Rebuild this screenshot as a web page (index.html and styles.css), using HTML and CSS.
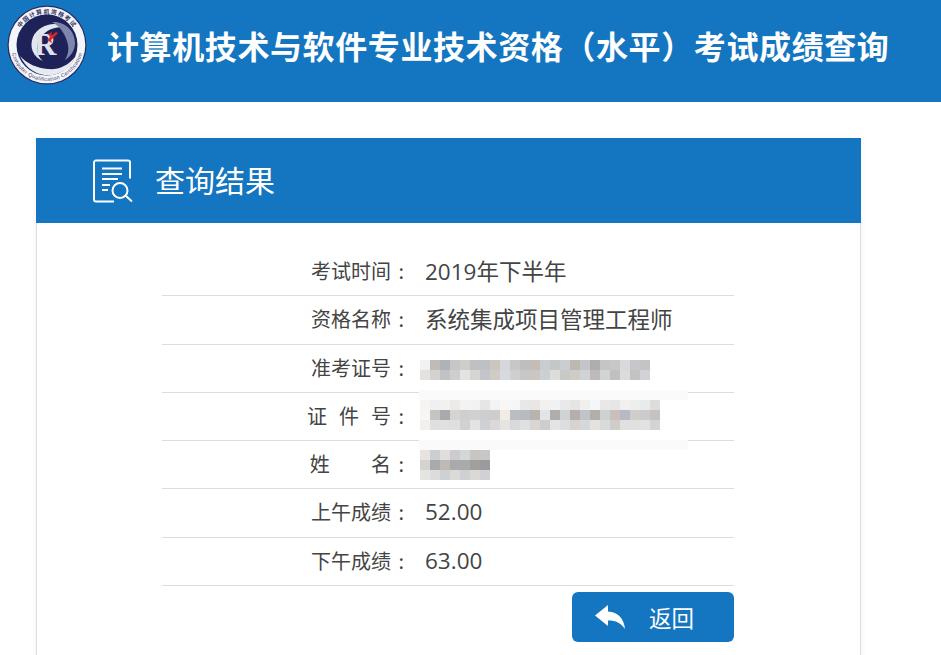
FILE: index.html
```html
<!DOCTYPE html>
<html lang="zh-CN">

<head>
    <meta charset="UTF-8">
    <meta name="viewport" content="width=device-width, initial-scale=1.0">
    <title>成绩查询</title>
    <link rel="stylesheet" href="styles.css">
</head>

<body>
    <div class="top">
        <svg class="logo" viewBox="0 0 80 80">
            <defs>
                <path id="ringTop" d="M8.500 40a31.500 31.500 0 0 1 63 0" />
                <path id="ringBottom" d="M4 40a36 36 0 0 0 72 0" />
            </defs>
            <circle cx="40" cy="40" r="39.5" fill="#2a2a60" />
            <circle cx="40" cy="40" r="38.3" fill="#f4f5f8" />
            <circle cx="40" cy="40" r="30.5" fill="#1f2258" />
            <text class="ring-cn"><textPath href="#ringTop" startOffset="50%" text-anchor="middle">中国计算机资格考试</textPath></text>
            <text class="ring-en"><textPath href="#ringBottom" startOffset="50%" text-anchor="middle">Computer Qualification Certification</textPath></text>
            <path d="M13 51c7 15 21 21 33 19 10-2 19-9 22-18-7 9-17 13-27 12-11-1-21-5-28-13z" fill="#e8eaf2" />
            <path d="M60 23C48 15 32 20 26 32c-4 10 0 20 10 24-6-5-8-13-4-21 5-9 16-15 28-12z" fill="#e4e6ef" />
            <path d="M45 17c13-1 23 9 23 21 0 7-4 13-10 17 3-5 4-10 3-15-2-10-7-18-16-23z" fill="#7f86ad" />
            <text class="logo-r" x="27" y="50">R</text>
            <path d="M41 29l4-2-1 4 5-4 2 1-7 7 1 3-5-3 3-3z" fill="#d9252c" />
        </svg>
        <h1 class="top-title">计算机技术与软件专业技术资格<span class="paren">（</span>水平<span class="paren">）</span>考试成绩查询</h1>
    </div>

    <div class="card">
        <div class="card-head">
            <svg class="doc-icon" viewBox="0 0 40 44" fill="none" stroke="#fff" stroke-width="2">
                <path d="M21 42.500H3a2 2 0 0 1-2-2v-37a2 2 0 0 1 2-2h32a2 2 0 0 1 2 2v16" />
                <path d="M9 9.500h20M9 15h20M9 20h16M9 26h8M9 31h6" />
                <circle cx="27" cy="31.500" r="7.500" />
                <path d="M33 37l6 5.500" />
            </svg>
            <div class="card-title">查询结果</div>
        </div>
        <div class="result">
            <div class="row"><span class="label">考试时间<i class="colon">:</i></span><span class="val">2019年下半年</span></div>
            <div class="row"><span class="label">资格名称<i class="colon">:</i></span><span class="val">系统集成项目管理工程师</span></div>
            <div class="row"><span class="label">准考证号<i class="colon">:</i></span><div class="mosaic mosaic-id" data-k="0"></div></div>
            <div class="row"><span class="label label-wide">证 件 号<i class="colon">:</i></span><div class="mosaic mosaic-band" data-k="1"></div></div>
            <div class="row"><span class="label">姓&emsp;&emsp;&#8202;名<i class="colon">:</i></span><div class="mosaic mosaic-name" data-k="2"></div></div>
            <div class="row"><span class="label">上午成绩<i class="colon">:</i></span><span class="val">52.00</span></div>
            <div class="row"><span class="label">下午成绩<i class="colon">:</i></span><span class="val">63.00</span></div>
            <div class="btn-row">
                <button class="back">
                    <svg class="back-icon" viewBox="0 0 30 24"><path d="M0 10.500L13 0v6.500c10 .5 16 7 17 17.500-4-6-9-8.500-17-8.500V21z" fill="#fff" /></svg>
                    <span>返回</span>
                </button>
            </div>
        </div>
    </div>

    <script>
        // blurred personal fields, one colour per 10px block
        let blocks = [
            ["f2f1f0 bfbbb8 b0b2b9 c6c6c6 cfcdca c0c0c2 bfc0c2 cbc7c0 d4d8dc c6c8c8 bdbdc2 c4bcb6 c9cdd1 c5c6c6 cbced0 bdb8b2 c3c5cb b0adb0 c4c5c7 c9c7c4 d8d9dc c6c7c8 c4c4c7",
             "e4e1de d3d2cf c0c3c6 d0cecc e3e3e2 d6d5d2 c4c5ca cfccc5 d6dade cfcfcf c7c7c9 cbc6c2 ccd0d3 dcdcdb c8cac8 cfcbc5 d1d2d3 bdbabb d2d3d5 c1bfc0 dcdcdb c5c3c1 d2d2d6"],
            ["f5f4f3 eef0f2 f2f1f1 ebeae8 f3f3f2 f1f2f2 e6e6e6 f2f3f3 f8f7f6 f5f6f6 e8e8e8 e8e7e5 f2f1ef f0f1f3 e8e9ea e5e5e5 efefec f5f6f7 e8e8e8 e6e6e6 f2f0ee eeeeec e9eaec dddddd",
             "f7f6f5 c6c4c2 aaa9ae d5d4d3 cfcfcf d1d1d1 cdced1 cecdcc f1ede6 babdc1 b7bbbf b9b3ae e2e5e7 afaeae d0d3d4 b5aeaa c0c3c7 b2afaa ced1d2 c9bfbc b7bac4 d0cdca cbcbcd c5c2bf",
             "f1f0ef dfdfdf e0e0e0 e0dfde d1d1d1 e4e3e1 cfd0d5 dad9d7 e6e4e1 d8d9db dfe0e2 d8d6d3 cecdcd e4e4e4 dcdddf d8d3ce d7d7da e2e2de d9dadb cfcdca e1e0df e0e0df e2e2e2 d4d4d4"],
            ["e6e3e0 ccced0 e0dedd ccccce d3d7d8 c8c5c3 c6c7c9",
             "d6d3ce a8aaac bfb9b3 a8aaac a8aaac a39f9c 9b9b9e",
             "e4e4e2 dcdcdc ced0d3 dcdad6 cfd0d4 d9d9d6 cfd1d4"]
        ]
        document.querySelectorAll(".mosaic").forEach(m => {
            blocks[m.dataset.k].forEach(line => {
                let row = document.createElement("div")
                row.className = "mosaic-line"
                row.innerHTML = line.split(" ").map(c => `<i style="background:#${c}"></i>`).join("")
                m.appendChild(row)
            })
        })
    </script>
</body>

</html>
```

FILE: styles.css
```css
* {
    box-sizing: border-box;
    padding: 0;
    margin: 0;
}

html,
body {
    height: 100%;
    overflow: hidden;
}

body {
    font-family: "Noto Sans CJK SC", "Liberation Sans", sans-serif;
    color: #444;
    background: #fff;
}

.top {
    height: 102px;
    background: #1475c0;
    display: flex;
    align-items: flex-start;
    padding: 5px 0 0 7px;
}

.logo {
    width: 80px;
    height: 80px;
    flex: none;
}

.ring-cn {
    font-size: 6px;
    font-weight: bold;
    fill: #34386a;
    letter-spacing: 1px;
}

.ring-en {
    font-size: 5.200px;
    font-family: "Liberation Sans", sans-serif;
    fill: #34386a;
    letter-spacing: .4px;
}

.logo-r {
    font-family: "Liberation Serif", serif;
    font-size: 31px;
    font-weight: bold;
    fill: #dfe1ea;
}

.top-title {
    font-size: 32px;
    letter-spacing: .6px;
    font-weight: bold;
    color: #fff;
    line-height: 46px;
    margin: 17px 0 0 20px;
    white-space: nowrap;
}

.paren {
    font-family: "Noto Sans CJK TC", "Noto Sans CJK SC", sans-serif;
}

.card {
    width: 825px;
    height: 600px;
    margin: 36px 0 0 36px;
    border: solid 1px #ddd;
    border-top: 0;
    box-shadow: 0 0 8px rgba(0, 0, 0, .05);
}

.card-head {
    height: 85px;
    margin: 0 -1px;
    background: #1475c0;
    display: flex;
    align-items: center;
    padding-left: 57px;
}

.doc-icon {
    width: 40px;
    height: 44px;
    flex: none;
}

.card-title {
    font-size: 30px;
    font-weight: 400;
    color: #fff;
    margin: 0 0 4px 22px;
}

.result {
    width: 572px;
    margin: 25px 0 0 125px;
}

.row {
    height: 48.280px;
    display: flex;
    align-items: center;
    padding-bottom: 2px;
    border-bottom: solid 1px #ddd;
    position: relative;
}

.label {
    width: 247px;
    text-align: right;
    font-size: 20px;
    flex: none;
    white-space: nowrap;
}

.label-wide {
    word-spacing: 7.500px;
}

.colon {
    display: inline-block;
    width: 18px;
    font-style: normal;
    text-align: right;
    padding-right: 5px;
}

.val {
    font-family: "Open Sans", "Noto Sans CJK SC", sans-serif;
    font-size: 22.500px;
    margin-left: 16px;
}

.mosaic {
    position: absolute;
    left: 258px;
}

.mosaic-id {
    top: 15px;
}

.mosaic-name {
    top: 9px;
}

.mosaic-band {
    top: -3px;
    left: 257px;
    width: 269px;
    height: 60px;
    padding: 10px 0 0 1px;
    background: linear-gradient(#fafafa 10px, #fff 10px 50px, #fafafa 50px);
}

.mosaic-line {
    display: flex;
    height: 10px;
}

.mosaic-line i {
    display: block;
    width: 10px;
    height: 10px;
}

.btn-row {
    display: flex;
    justify-content: flex-end;
    margin-top: 6px;
}

.back {
    width: 162px;
    height: 50px;
    border: 0;
    border-radius: 6px;
    background: #1475c0;
    color: #fff;
    font-family: inherit;
    font-size: 22.500px;
    display: flex;
    align-items: center;
    padding-left: 23px;
}

.back-icon {
    width: 30px;
    height: 24px;
    margin-right: 24px;
    flex: none;
}
```
